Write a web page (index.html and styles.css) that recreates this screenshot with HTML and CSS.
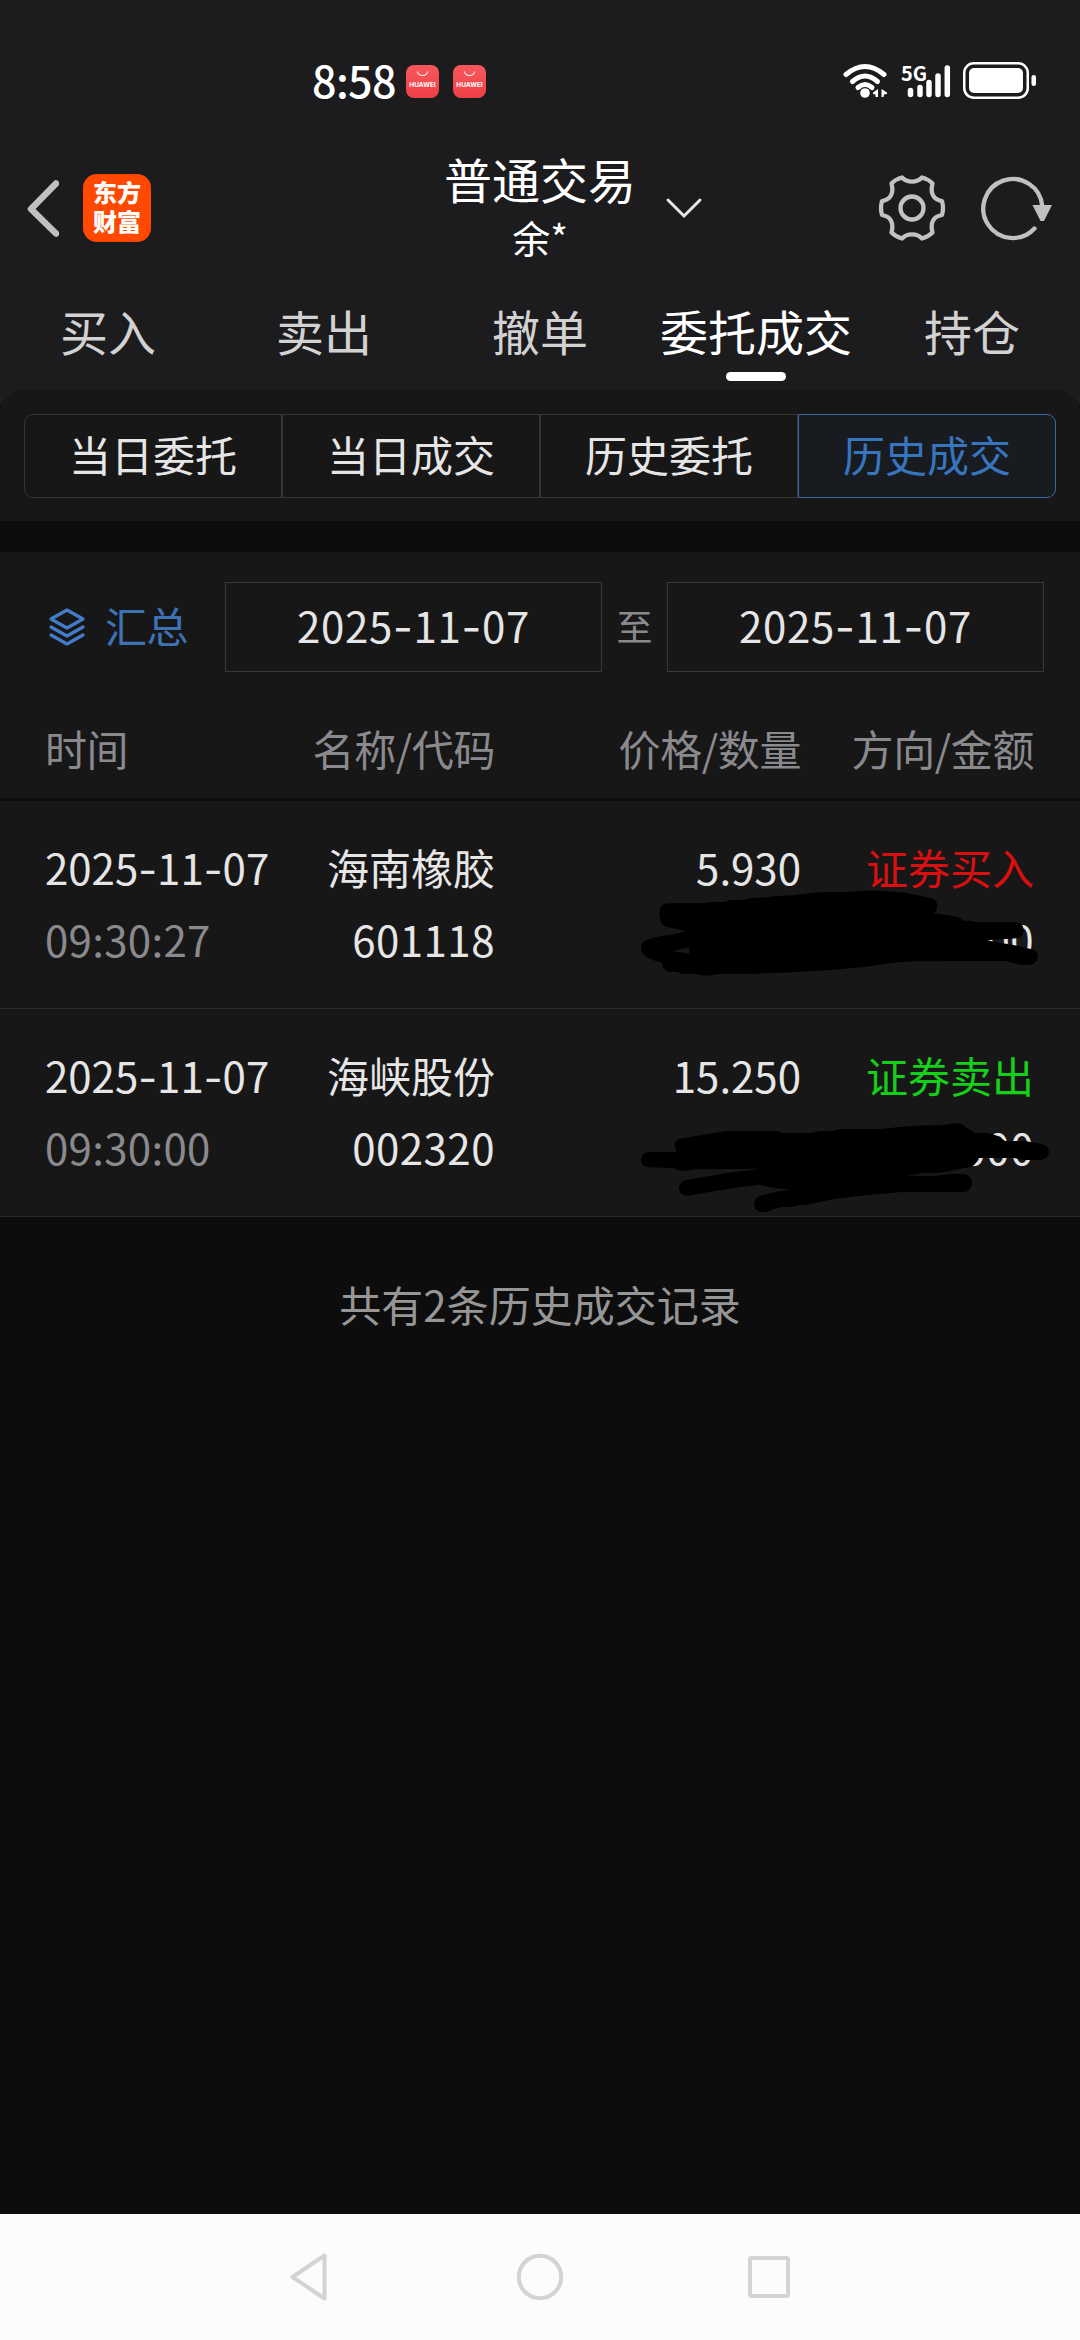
FILE: index.html
```html
<!DOCTYPE html>
<html lang="zh-CN">
<head>
<meta charset="utf-8">
<title>普通交易</title>
<link rel="stylesheet" href="styles.css">
</head>
<body>
<div class="screen">
  <div class="status">
    <span class="clock">8:58</span>
    <span class="store"><svg width="33" height="33" viewBox="0 0 33 33"><path d="M11.500 6.500a5 4 0 0 0 10 0" fill="none" stroke="#fff" stroke-width="1.100"/></svg><b>HUAWEI</b></span>
    <span class="store"><svg width="33" height="33" viewBox="0 0 33 33"><path d="M11.500 6.500a5 4 0 0 0 10 0" fill="none" stroke="#fff" stroke-width="1.100"/></svg><b>HUAWEI</b></span>
    <svg class="wifi" width="46" height="36" viewBox="0 0 46 36">
      <g fill="none" stroke="#fff" stroke-width="5" stroke-linecap="round"><path d="M3 11.500Q22 -4.500 41 11.500"/><path d="M9.500 18.500Q22 7.500 34.500 18.500"/><path d="M15 24.500Q22 18.500 29 24.500"/></g>
      <circle cx="22" cy="30" r="4.800" fill="#fff"/>
      <path d="M35 26v8h-2.500v-2.500L30 31v-1.500zM38.500 26l5.500 3.500v1.500l-3 .5-.5 2.500h-2z" fill="#fff"/>
    </svg>
    <span class="signal"><b>5G</b><svg width="52" height="36" viewBox="0 0 52 36"><path d="M10.500 27.500v4M20 24.500v7M29 19.500v12M38 13v18.500M47.300 5v26.500" stroke="#fff" stroke-width="5.500" stroke-linecap="round"/></svg></span>
    <svg class="battery" width="75" height="38" viewBox="0 0 75 38"><rect x="1.250" y="1.250" width="63.500" height="34.500" rx="9.500" fill="none" stroke="#fff" stroke-width="2.500"/><rect x="6" y="6" width="54" height="25" rx="5" fill="#fff"/><rect x="68.500" y="13" width="4.500" height="11" rx="2.200" fill="#fff"/></svg>
  </div>

  <header class="header">
    <div class="left">
      <svg width="34" height="60" viewBox="0 0 34 60"><path d="M31 5.500L6 31l25 24.500" fill="none" stroke="#c0c0c0" stroke-width="6.500" stroke-linecap="round" stroke-linejoin="round"/></svg>
      <div class="logo">东方<br>财富</div>
    </div>
    <div class="title"><h1>普通交易</h1><p>余*</p></div>
    <svg class="caret" width="38" height="22" viewBox="0 0 38 22"><path d="M3 3l16 16L35 3" fill="none" stroke="#e6e6e6" stroke-width="3" stroke-linecap="round"/></svg>
    <div class="tools">
      <svg width="68" height="68" viewBox="-34 -34 68 68" fill="none" stroke="#c2c2c2" stroke-width="4.300" stroke-linejoin="round"><circle r="11.500"/><path d="M-10 -30.500C-5 -25 5 -25 10 -30.500Q16 -29 20.500 -24.500C18 -15 21 -8.500 30 -7Q32 0 30 7C21 8.500 18 15 20.500 24.500Q16 29 10 30.500C5 25 -5 25 -10 30.500Q-16 29 -20.500 24.500C-18 15 -21 8.500 -30 7Q-32 0 -30 -7C-21 -8.500 -18 -15 -20.500 -24.500Q-16 -29 -10 -30.500Z"/></svg>
      <svg width="74" height="68" viewBox="-34 -34 74 68"><path d="M29.200 -2A29.500 29.500 0 1 0 21.500 20.500" fill="none" stroke="#c0c0c0" stroke-width="4.300" stroke-linecap="round"/><path d="M19.500 -3h19.500L31 13h-3.500z" fill="#c0c0c0"/></svg>
    </div>
  </header>

  <nav class="tabs"><a>买入</a><a>卖出</a><a>撤单</a><a class="on">委托成交</a><a>持仓</a></nav>

  <div class="panel-wrap"><div class="panel">
    <div class="segments"><a>当日委托</a><a>当日成交</a><a>历史委托</a><a class="on">历史成交</a></div>
  </div></div>

  <main>
    <div class="filter">
      <div class="sum"><svg width="38" height="40" viewBox="0 0 38 40" fill="none" stroke="#427dcb" stroke-width="3.200" stroke-linecap="round" stroke-linejoin="round"><path d="M19 3L35 12 19 21 3 12Z"/><path d="M3 20l16 9 16-9M3 28l16 9 16-9"/></svg><span>汇总</span></div>
      <div class="date">2025<i>-</i>11<i>-</i>07</div><span class="to">至</span><div class="date">2025<i>-</i>11<i>-</i>07</div>
    </div>
    <div class="row head"><span>时间</span><span>名称/代码</span><span>价格/数量</span><span>方向/金额</span></div>
    <div class="row">
      <span class="day">2025<i>-</i>11<i>-</i>07</span><span>海南橡胶</span><span class="price">5.930</span><span class="buy">证券买入</span>
      <span class="time">09:30:27</span><span class="num">601118</span><span></span><span class="num amount">00</span>
      <svg class="scribble first" width="480" height="220" viewBox="0 0 1440 660"><path d="M178 365Q180 342 202 340L315 340 330 336 375 336 390 330 430 329 450 324 500 322 530 318 575 316 660 307 740 306 820 301 915 308 992 324Q1012 331 1012 347 1010 366 1000 368L1070 380Q1084 384 1088 392L1110 392 1130 397 1250 397Q1272 402 1271 422 1269 443 1250 445L1160 451 1190 457 1240 465 1292 477Q1314 481 1314 500 1310 522 1290 524L1260 524 1215 513 940 514 880 518 800 530 690 540 590 546 440 552 355 552Q320 562 285 552L245 551 232 546 205 545Q186 539 186 520L145 505Q123 492 123 470 126 450 150 447L185 437 210 436 257 424 202 411Q179 403 180 382Z"/><path d="M220 484L266 472 268 491Z" fill="#171717"/></svg>
    </div>
    <div class="row">
      <span class="day">2025<i>-</i>11<i>-</i>07</span><span>海峡股份</span><span class="price">15.250</span><span class="sell">证券卖出</span>
      <span class="time">09:30:00</span><span class="num">002320</span><span></span><span class="num amount">000</span>
      <svg class="scribble second" width="480" height="230" viewBox="0 0 1440 690"><path d="M223 437Q225 418 246 415L380 393 530 393 550 399 630 399 660 393 695 393 720 387 840 387 940 377 1020 376 1075 370Q1092 372 1098 384 1114 388 1122 399L1160 399Q1195 404 1215 423L1275 423 1325 432Q1347 438 1347 457 1343 479 1322 480L1275 480 1240 474 1133 474Q1130 495 1110 501L1020 518 970 519 920 527 1000 528 1050 522 1095 522Q1116 529 1116 550 1113 573 1093 576L905 576 775 588 700 597 620 614 590 616 575 621 545 621 515 629 500 636Q465 642 462 612 465 588 490 585L540 573 572 570 510 562 480 554 400 564 262 587Q238 586 237 565 239 543 260 540L380 519 483 506 280 508Q245 520 218 504L145 502Q123 497 123 479 127 456 150 456L229 456Z"/></svg>
    </div>
    <p class="total">共有2条历史成交记录</p>
  </main>

  <footer class="sysnav">
    <svg width="60" height="60" viewBox="-30 -30 60 60"><path d="M13.500 -21.500V21.500L-18.500 0Z"/></svg>
    <svg width="60" height="60" viewBox="-30 -30 60 60"><circle r="21.200"/></svg>
    <svg width="60" height="60" viewBox="-30 -30 60 60"><rect x="-19" y="-19" width="38" height="38" rx="1.500"/></svg>
  </footer>
</div>
</body>
</html>
```

FILE: styles.css
```css
* { box-sizing: border-box; }
body { margin: 0; background: #0d0d0d; font-family: "Noto Sans CJK SC", sans-serif; font-size: 42px; color: #e6e6e6; }
svg { display: block; flex: none; }
h1, p { margin: 0; font-weight: 400; }
i { font-style: normal; font-family: Inter, sans-serif; font-size: 43px; }
.screen { width: 1080px; height: 2340px; display: flex; flex-direction: column; overflow: hidden; white-space: nowrap; }

.status { height: 144px; padding: 18px 42px 0 312px; background: #1c1c1e; display: flex; align-items: center; color: #fff; }
.clock { width: 94px; flex: none; font-size: 43px; font-weight: 500; letter-spacing: -.6px; line-height: 60px; padding-bottom: 4px; }
.store { width: 33px; height: 33px; flex: none; margin-right: 14px; border-radius: 8px; background: linear-gradient(#f8595c, #ee3e45); display: grid; grid-template-columns: 33px; }
.store > * { grid-area: 1 / 1; }
.store b { font: 700 6.500px/33px Inter, sans-serif; text-align: center; align-self: center; padding-top: 4px; }
.wifi { margin-left: auto; }
.signal { display: grid; flex: none; width: 52px; margin: 0 11px 0 11px; }
.signal > * { grid-area: 1 / 1; }
.signal b { font: 700 20px/20px "Noto Sans CJK SC", sans-serif; padding-left: 1px; }

.header { height: 146px; background: #1c1c1e; display: grid; grid-template-columns: 440px 200px 84px 1fr; align-items: center; padding-right: 27px; }
.left { display: flex; align-items: center; padding-left: 25px; gap: 24px; margin-bottom: 18px; }
.logo { width: 68px; height: 68px; border-radius: 14px; background: #ff4800; color: #fff; text-align: center; font-size: 24px; font-weight: 900; line-height: 29px; padding-top: 3px; }
.title { text-align: center; color: #fff; margin-bottom: 20px; }
.title h1 { font-size: 48px; line-height: 60px; }
.title p { font-size: 38px; line-height: 58px; }
.caret { justify-self: center; margin-left: 4px; margin-bottom: 18px; }
.tools { display: flex; justify-content: flex-end; gap: 33px; margin-bottom: 18px; }

.tabs { height: 100px; background: #1c1c1e; display: grid; grid-template-columns: repeat(5, 216px); font-size: 48px; color: #d2d2d2; }
.tabs a { display: flex; flex-direction: column; align-items: center; line-height: 80px; }
.tabs .on { color: #fff; }
.tabs .on::after { content: ""; width: 60px; height: 9px; border-radius: 5px; background: #fff; margin-top: 2px; }

.panel-wrap { background: linear-gradient(#1c1c1e 15px, #0d0d0d 15px); }
.panel { height: 131px; padding: 24px; background: #171717; border-radius: 24px 24px 0 0; }
.segments { display: grid; grid-template-columns: repeat(4, 258px); }
.segments a { height: 84px; line-height: 78px; text-align: center; border: 1px solid #363636; }
.segments a:first-child { border-radius: 9px 0 0 9px; }
.segments .on { border-radius: 0 9px 9px 0; border-color: #3b6aa3; background: #181c21; color: #3875bf; }

main { flex: 1; padding-top: 31px; }
.filter { height: 150px; padding: 0 36px 0 48px; background: #171717; display: flex; align-items: center; }
.sum { width: 177px; display: flex; align-items: center; gap: 19px; color: #3d73b5; }
.sum span { line-height: 60px; padding-bottom: 4px; letter-spacing: -.5px; }
.date { width: 377px; height: 90px; border: 1px solid #383838; line-height: 84px; text-align: center; letter-spacing: .7px; }
.date i { line-height: 1; }
.to { width: 65px; text-align: center; font-size: 36px; color: #8a8a8e; padding-bottom: 4px; }

.row { position: relative; display: grid; grid-template-columns: 223px 226px 306px 233px; grid-auto-rows: 72px; line-height: 67px; text-align: right; padding: 32px 46px 31px; height: 208px; background: #171717; border-bottom: 1px solid #2a2a2a; }
.row > span:nth-child(4n+1) { text-align: left; }
.row > .day, .row > .time, .head > span:first-child { margin-left: -1px; }
.row i { font-size: 41px; line-height: 1; }
.head { height: 99px; padding: 12px 46px; border-bottom: 3px solid #0d0d0d; color: #8a8a8e; letter-spacing: -.4px; }
.num { letter-spacing: .5px; }
.price { letter-spacing: 0; }
.time { color: #8a8a8e; letter-spacing: .3px; }
.buy { color: #d90f10; }
.sell { color: #15cf18; }
.scribble { position: absolute; left: 600px; }
.first { top: -11px; }
.second { top: -9px; }
.total { padding-top: 52px; line-height: 70px; text-align: center; color: #969696; }

.sysnav { height: 126px; background: #fcfcfc; display: flex; justify-content: center; align-items: center; gap: 169px; }
.sysnav svg { fill: none; stroke: #d3d3d3; stroke-width: 4px; stroke-linejoin: round; }
```
